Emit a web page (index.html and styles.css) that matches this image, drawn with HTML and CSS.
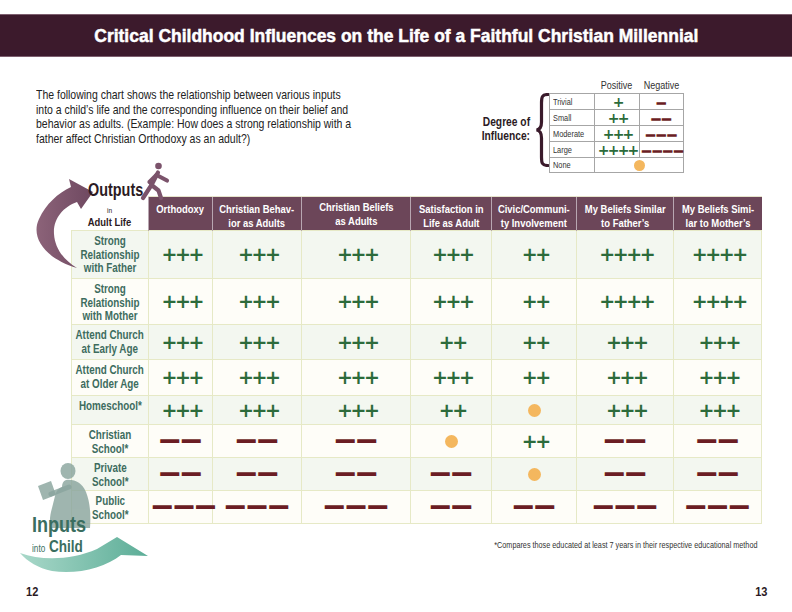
FILE: index.html
```html
<!DOCTYPE html>
<html lang="en">
<head>
<meta charset="utf-8">
<title>Critical Childhood Influences</title>
<link rel="stylesheet" href="styles.css">
</head>
<body>
<div class="page">
  <header class="banner">
    <h1>Critical Childhood Influences on the Life of a Faithful Christian Millennial</h1>
  </header>

  <section class="intro">
    <p class="lead">The following chart shows the relationship between various inputs<br>into a child’s life and the corresponding influence on their belief and<br>behavior as adults. (Example: How does a strong relationship with a<br>father affect Christian Orthodoxy as an adult?)</p>
    <div class="legend">
      <div class="legend-title">Degree of<br>Influence:</div>
      <svg class="brace" viewBox="0 0 14 74" aria-hidden="true">
        <path d="M13,1.5 C7,1.5 6.5,4 6.5,10 L6.5,29 C6.5,34 5,36.5 1.5,37 C5,37.5 6.5,40 6.5,45 L6.5,64 C6.5,70 7,72.5 13,72.5" fill="none" stroke="#3a1a2b" stroke-width="3.2" stroke-linecap="round"/>
      </svg>
      <div class="legend-box">
        <div class="legend-head"><span>Positive</span><span>Negative</span></div>
        <table class="legend-table">
          <tr><td class="lbl"><span class="lx">Trivial</span></td><td><span class="pos sm">+</span></td><td><span class="neg sm">—</span></td></tr>
          <tr><td class="lbl"><span class="lx">Small</span></td><td><span class="pos sm">++</span></td><td><span class="neg sm">——</span></td></tr>
          <tr><td class="lbl"><span class="lx">Moderate</span></td><td><span class="pos sm">+++</span></td><td><span class="neg sm">———</span></td></tr>
          <tr><td class="lbl"><span class="lx">Large</span></td><td><span class="pos sm">++++</span></td><td><span class="neg sm">————</span></td></tr>
          <tr><td class="lbl"><span class="lx">None</span></td><td colspan="2"><span class="dot sm"></span></td></tr>
        </table>
      </div>
    </div>
  </section>

  <section class="chart">
    <table class="grid">
      <colgroup>
        <col class="w-label"><col class="w-orth"><col class="w-behav"><col class="w-beliefs"><col class="w-satis"><col class="w-civic"><col class="w-father"><col class="w-mother">
      </colgroup>
      <thead>
        <tr>
          <th class="corner"><span class="cx"><span class="in">in</span><span class="adult">Adult Life</span></span></th>
          <th><span class="cx">Orthodoxy</span></th>
          <th><span class="cx">Christian Behav-<br>ior as Adults</span></th>
          <th class="hi"><span class="cx">Christian Beliefs<br>as Adults</span></th>
          <th><span class="cx">Satisfaction in<br>Life as Adult</span></th>
          <th><span class="cx">Civic/Communi-<br>ty Involvement</span></th>
          <th><span class="cx">My Beliefs Similar<br>to Father’s</span></th>
          <th><span class="cx">My Beliefs Simi-<br>lar to Mother’s</span></th>
        </tr>
      </thead>
      <tbody>
        <tr class="h48">
          <th><span class="cx">Strong<br>Relationship<br>with Father</span></th>
          <td><span class="pos">+++</span></td><td><span class="pos">+++</span></td><td><span class="pos">+++</span></td><td><span class="pos">+++</span></td><td><span class="pos">++</span></td><td><span class="pos">++++</span></td><td><span class="pos">++++</span></td>
        </tr>
        <tr class="h46">
          <th><span class="cx">Strong<br>Relationship<br>with Mother</span></th>
          <td><span class="pos">+++</span></td><td><span class="pos">+++</span></td><td><span class="pos">+++</span></td><td><span class="pos">+++</span></td><td><span class="pos">++</span></td><td><span class="pos">++++</span></td><td><span class="pos">++++</span></td>
        </tr>
        <tr class="h35">
          <th><span class="cx">Attend Church<br>at Early Age</span></th>
          <td><span class="pos">+++</span></td><td><span class="pos">+++</span></td><td><span class="pos">+++</span></td><td><span class="pos">++</span></td><td><span class="pos">++</span></td><td><span class="pos">+++</span></td><td><span class="pos">+++</span></td>
        </tr>
        <tr class="h36">
          <th><span class="cx">Attend Church<br>at Older Age</span></th>
          <td><span class="pos">+++</span></td><td><span class="pos">+++</span></td><td><span class="pos">+++</span></td><td><span class="pos">+++</span></td><td><span class="pos">++</span></td><td><span class="pos">+++</span></td><td><span class="pos">+++</span></td>
        </tr>
        <tr class="h29">
          <th><span class="cx">Homeschool*</span></th>
          <td><span class="pos">+++</span></td><td><span class="pos">+++</span></td><td><span class="pos">+++</span></td><td><span class="pos">++</span></td><td><span class="dot"></span></td><td><span class="pos">+++</span></td><td><span class="pos">+++</span></td>
        </tr>
        <tr class="h33">
          <th><span class="cx">Christian<br>School*</span></th>
          <td><span class="neg">——</span></td><td><span class="neg">——</span></td><td><span class="neg">——</span></td><td><span class="dot"></span></td><td><span class="pos">++</span></td><td><span class="neg">——</span></td><td><span class="neg">——</span></td>
        </tr>
        <tr class="h33">
          <th><span class="cx">Private<br>School*</span></th>
          <td><span class="neg">——</span></td><td><span class="neg">——</span></td><td><span class="neg">——</span></td><td><span class="neg">——</span></td><td><span class="dot"></span></td><td><span class="neg">——</span></td><td><span class="neg">——</span></td>
        </tr>
        <tr class="h33">
          <th><span class="cx">Public<br>School*</span></th>
          <td><span class="neg">———</span></td><td><span class="neg">———</span></td><td><span class="neg">———</span></td><td><span class="neg">——</span></td><td><span class="neg">——</span></td><td><span class="neg">———</span></td><td><span class="neg">———</span></td>
        </tr>
      </tbody>
    </table>
    <p class="note">*Compares those educated at least 7 years in their respective educational method</p>
  </section>

  <footer class="folios"><span class="f-left">12</span><span class="f-right">13</span></footer>

  <svg class="decor" viewBox="0 0 792 612" aria-hidden="true">
    <defs>
      <linearGradient id="pg" x1="0" y1="0" x2="1" y2="0">
        <stop offset="0" stop-color="#8c6379"/>
        <stop offset="1" stop-color="#6e4860"/>
      </linearGradient>
      <linearGradient id="tg" x1="0" y1="0" x2="1" y2="0">
        <stop offset="0" stop-color="#a9d8c9"/>
        <stop offset="1" stop-color="#5cad97"/>
      </linearGradient>
    </defs>
    <path fill="url(#pg)" d="M77,268 C46,259 30,238 39,219 C46,204 58,193 71,187 L69,179 L93,192 L81,209 L77,202 C63,207 53,219 54,234 C55,249 64,260 77,268 Z"/>
    <circle cx="158.5" cy="166" r="3.3" fill="#7b536b"/>
    <g stroke="#7b536b" stroke-width="4.2" stroke-linecap="round" stroke-linejoin="round" fill="none">
      <path d="M158,172.5 L151.5,185"/>
      <path d="M156.5,175 L167,180.5"/>
      <path d="M156,175.5 L149.5,182"/>
      <path d="M151.5,185 L143,198"/>
      <path d="M151.5,185 L158.5,190.5 L161,198"/>
    </g>
    <g fill="#8aa59e" opacity="0.82">
      <ellipse cx="68" cy="471" rx="7.5" ry="8"/>
      <path d="M66,480 C75,479 82,483 86,492 C90,502 91,514 90,528 L51,528 C49,522 50,515 52,508 L55,496 C56,491 59,488 62,487 C62,484 63,481 66,480 Z"/>
      <path d="M38,486 L51,481 L56,495 L43,500 Z"/>
    </g>
    <path d="M69,487 L51,494" stroke="#8aa59e" stroke-width="5" stroke-linecap="round" opacity="0.82"/>
    <path fill="url(#tg)" d="M20,553 C42,561 72,560 97,549 L117,537 L148,556 L121,555 C105,568 76,575 52,571 C38,568 28,562 20,553 Z"/>
  </svg>

  <div class="outputs">Outputs</div>
  <div class="inputs">Inputs<span class="into-line"><small>into</small> Child</span></div>
</div>
</body>
</html>
```

FILE: styles.css
```css
* { box-sizing: border-box; }
html, body { margin: 0; padding: 0; }
body {
  background: #fff;
  color: #222;
  font-family: "Liberation Sans", Arial, sans-serif;
}
.page {
  position: relative;
  width: 792px;
  height: 612px;
  overflow: hidden;
}

/* banner */
.banner {
  margin-top: 14px;
  height: 43px;
  background: #3c1a2c;
  border-top: 1px solid #7d5f6f;
  border-bottom: 1px solid #7d5f6f;
  display: flex;
  align-items: center;
  justify-content: center;
}
.banner h1 {
  margin: 0;
  font-size: 19px;
  font-weight: bold;
  color: #fff;
  white-space: nowrap;
  -webkit-text-stroke: 0.5px #fff;
  transform: scaleX(0.92);
}

/* intro */
.intro {
  display: flex;
  height: 109px;
  padding: 22px 108px 0 36px;
}
.lead {
  margin: 9px 0 0;
  width: 380px;
  flex: none;
  white-space: nowrap;
  font-size: 12.2px;
  line-height: 14.5px;
  color: #222;
  transform: scaleX(0.86);
  transform-origin: left top;
}
.legend {
  margin-left: auto;
  display: flex;
}
.legend-title {
  margin: 36px 5px 0 0;
  text-align: right;
  font-weight: bold;
  font-size: 12.5px;
  line-height: 14px;
  color: #2b1a23;
  white-space: nowrap;
  transform: scaleX(0.82);
  transform-origin: right top;
}
.brace {
  margin-top: 14px;
  width: 14px;
  height: 74px;
}
.legend-box { width: 135px; }
.legend-head {
  display: flex;
  height: 14px;
  padding-left: 45px;
}
.legend-head span {
  flex: 1;
  text-align: center;
  font-size: 11px;
  line-height: 12px;
  color: #333;
  transform: scaleX(0.82);
}
.legend-table {
  border-collapse: collapse;
  table-layout: fixed;
  width: 135px;
}
.legend-table td {
  border: 1px solid #a6a6a6;
  height: 14.5px;
  padding: 0;
  text-align: center;
  vertical-align: middle;
  line-height: 12px;
}
.legend-table td.lbl {
  width: 45px;
  text-align: left;
  padding-left: 3px;
  font-size: 9px;
  color: #333;
}
.lx {
  display: inline-block;
  transform: scaleX(0.82);
  transform-origin: left center;
}

/* symbols */
.pos {
  font-family: "DejaVu Sans", sans-serif;
  font-weight: bold;
  font-size: 19px;
  line-height: 20px;
  letter-spacing: -2.4px;
  padding-left: 2.4px;
  color: #2c6b3b;
}
.neg {
  font-family: "Liberation Sans", sans-serif;
  font-weight: bold;
  font-size: 17px;
  line-height: 20px;
  letter-spacing: 4.7px;
  padding-left: 4.7px;
  color: #6b1d24;
  -webkit-text-stroke: 2px #6b1d24;
}
.dot {
  display: inline-block;
  width: 13px;
  height: 13px;
  border-radius: 50%;
  background: #f4b75e;
  vertical-align: middle;
}
.pos.sm {
  font-size: 14px;
  line-height: 12px;
  letter-spacing: -1.8px;
  padding-left: 1.8px;
}
.neg.sm {
  font-size: 7.5px;
  line-height: 12px;
  letter-spacing: 3.2px;
  padding-left: 3.2px;
  -webkit-text-stroke: 2px #6b1d24;
}
.dot.sm { width: 11px; height: 11px; }

/* chart */
.chart {
  margin-top: 30px;
  padding-left: 71px;
}
.grid {
  border-collapse: collapse;
  table-layout: fixed;
  width: 690px;
}
.w-label { width: 77px; }
.w-orth { width: 64px; }
.w-behav { width: 89px; }
.w-beliefs { width: 109px; }
.w-satis { width: 81px; }
.w-civic { width: 85px; }
.w-father { width: 97px; }
.w-mother { width: 88px; }

.cx {
  display: inline-block;
  margin: 0 -30px;
  white-space: nowrap;
  transform: scaleX(0.82);
  transform-origin: center top;
}

.grid thead th {
  height: 33px;
  padding: 6px 0 0;
  vertical-align: top;
  background: #6c4659;
  color: #fff;
  font-size: 11.5px;
  line-height: 13.5px;
  font-weight: bold;
  border-left: 1px solid #b8a6b1;
  border-top: 1px solid #e6e4cb;
}
.grid thead th.hi { padding-top: 4px; }
.grid thead th.corner {
  background: transparent;
  border: none;
  padding-top: 8px;
  color: #2b1a23;
}
.corner .in {
  display: block;
  font-size: 8px;
  line-height: 11px;
  font-weight: normal;
}
.corner .adult {
  display: block;
  font-size: 11.5px;
  line-height: 13px;
}
.grid tbody th,
.grid tbody td {
  border: 1px solid #e6e9c6;
  padding: 0;
}
.grid tbody th {
  vertical-align: top;
  padding-top: 4px;
  font-size: 12px;
  line-height: 13.7px;
  font-weight: bold;
  color: #3d6c5e;
}
.grid tbody td {
  text-align: center;
  vertical-align: middle;
}
.grid tbody tr:nth-child(odd) { background: #f3f7f0; }
.grid tbody tr:nth-child(even) { background: #fefdf8; }
.h48 { height: 48px; }
.h46 { height: 46px; }
.h35 { height: 35px; }
.h36 { height: 36px; }
.h29 { height: 29px; }
.h33 { height: 33px; }

.note {
  margin: 15px 35px 0 auto;
  width: max-content;
  font-size: 9.3px;
  line-height: 12px;
  color: #333;
  white-space: nowrap;
  transform: scaleX(0.78);
  transform-origin: right center;
}

.folios {
  display: flex;
  justify-content: space-between;
  margin-top: 35px;
  padding: 0 25px 0 26px;
  font-weight: bold;
  font-size: 13px;
  line-height: 12px;
  color: #2b1a23;
}
.folios span {
  display: inline-block;
  transform: scaleX(0.85);
}
.folios .f-left { transform-origin: left center; }
.folios .f-right { transform-origin: right center; }

/* overlays */
.decor {
  position: absolute;
  left: 0;
  top: 0;
  width: 792px;
  height: 612px;
  pointer-events: none;
}
.outputs {
  position: absolute;
  left: 88px;
  top: 181px;
  font-size: 18px;
  line-height: 18.5px;
  font-weight: bold;
  color: #2b1a23;
  transform: scaleX(0.8);
  transform-origin: left top;
}
.inputs {
  position: absolute;
  left: 32px;
  top: 514px;
  font-size: 22px;
  line-height: 22px;
  font-weight: bold;
  color: #3a6e60;
  transform: scaleX(0.82);
  transform-origin: left top;
}
.into-line {
  display: block;
  margin-top: 2px;
  font-size: 16.5px;
  line-height: 16px;
}
.into-line small {
  font-size: 10px;
  font-weight: normal;
}
```
